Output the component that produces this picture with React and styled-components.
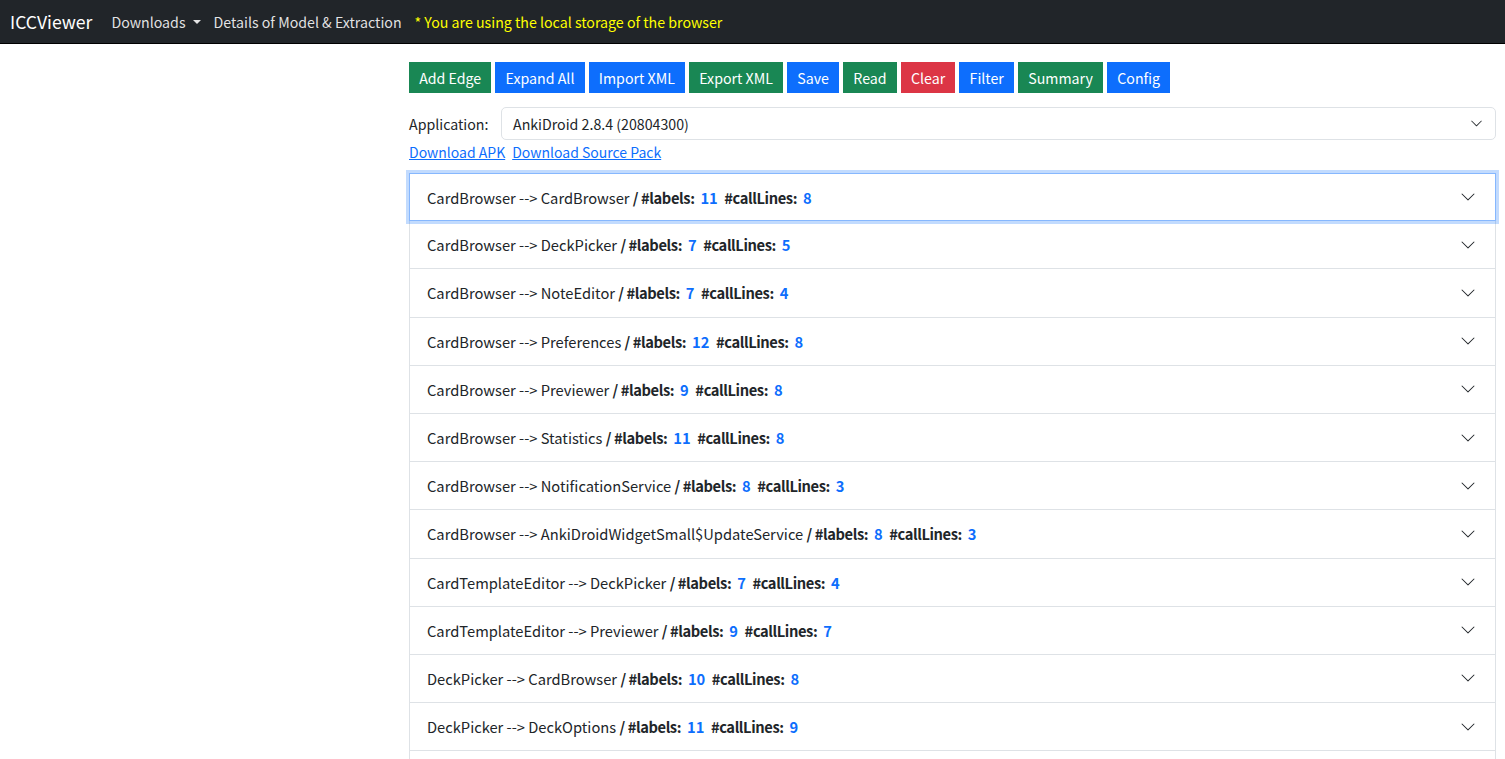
import React from 'react'
import styled, { createGlobalStyle } from 'styled-components'

const GlobalStyle = createGlobalStyle`
  body {
    margin: 0;
    font-family: "Noto Sans CJK SC", "Noto Sans", sans-serif;
    font-size: 15px;
    color: #212529;
    background: #fff;
  }
  * { box-sizing: border-box; }
`

const Navbar = styled.nav`
  height: 44px;
  background: #212529;
  display: flex;
  align-items: center;
  padding: 0 10px;
  border-bottom: 1px solid #000;
`
const Brand = styled.span`
  color: #fff;
  font-size: 17.6px;
  margin-right: 19px;
`
const NavLink = styled.span`
  color: ${p => (p.$warn ? '#ffff00' : 'rgba(255,255,255,.88)')};
  font-size: 14.2px;
  margin-right: 13px;
  display: flex;
  align-items: center;
`
const Caret = styled.span`
  display: inline-block;
  margin-left: 7px;
  border-top: 4px solid rgba(255,255,255,.88);
  border-left: 4px solid transparent;
  border-right: 4px solid transparent;
`

const Page = styled.div`
  display: grid;
  grid-template-columns: 409px 1fr;
  padding-right: 9px;
`
const Main = styled.main`
  padding-top: 18px;
`
const Toolbar = styled.div`
  display: flex;
  gap: 4px;
`
const Button = styled.button`
  font-family: inherit;
  font-size: 14.2px;
  height: 31px;
  padding: 0 9.2px;
  border: 1px solid ${p => p.$color};
  border-radius: 0;
  background: ${p => p.$color};
  color: #fff;
  cursor: pointer;
`
const AppRow = styled.div`
  display: flex;
  align-items: center;
  margin-top: 14px;
`
const Label = styled.label`
  width: 92px;
  font-size: 14.2px;
`
const Select = styled.div`
  flex: 1;
  height: 33px;
  border: 1px solid #dee2e6;
  border-radius: 5px;
  display: flex;
  align-items: center;
  justify-content: space-between;
  padding: 0 12px 0 11px;
  font-size: 14.2px;
`
const Links = styled.div`
  display: flex;
  gap: 7px;
  margin-top: 2px;
  font-size: 14px;
`
const A = styled.a`
  color: #0d6efd;
  text-decoration: underline;
`
const Accordion = styled.div`
  margin-top: 11px;
  border: 1px solid #dee2e6;
  border-bottom: none;
`
const Item = styled.div`
  display: flex;
  align-items: center;
  justify-content: space-between;
  height: 48.2px;
  padding: 0 19px 0 17px;
  border-bottom: 1px solid #dee2e6;
  font-size: 14.7px;
  white-space: pre;
  ${p => p.$focus && `
    border: 1px solid #86b7fe;
    margin: -1px -1px 0;
    box-shadow: 0 0 0 3px rgba(13,110,253,.25);
    position: relative;
  `}
`
const Bold = styled.b`
  font-weight: 700;
  letter-spacing: -0.4px;
`
const Num = styled.span`
  color: #0d6efd;
  font-weight: 700;
`

const Chevron = ({ size = 16 }) => (
  <svg width={size} height={size} viewBox="0 0 16 16" fill="#212529">
    <path fillRule="evenodd" d="M1.646 4.646a.5.5 0 0 1 .708 0L8 10.293l5.646-5.647a.5.5 0 0 1 .708.708l-6 6a.5.5 0 0 1-.708 0l-6-6a.5.5 0 0 1 0-.708z" />
  </svg>
)

const buttons = [
  ['Add Edge', '#198754'],
  ['Expand All', '#0d6efd'],
  ['Import XML', '#0d6efd'],
  ['Export XML', '#198754'],
  ['Save', '#0d6efd'],
  ['Read', '#198754'],
  ['Clear', '#dc3545'],
  ['Filter', '#0d6efd'],
  ['Summary', '#198754'],
  ['Config', '#0d6efd'],
]

const edges = [
  ['CardBrowser', 'CardBrowser', 11, 8],
  ['CardBrowser', 'DeckPicker', 7, 5],
  ['CardBrowser', 'NoteEditor', 7, 4],
  ['CardBrowser', 'Preferences', 12, 8],
  ['CardBrowser', 'Previewer', 9, 8],
  ['CardBrowser', 'Statistics', 11, 8],
  ['CardBrowser', 'NotificationService', 8, 3],
  ['CardBrowser', 'AnkiDroidWidgetSmall$UpdateService', 8, 3],
  ['CardTemplateEditor', 'DeckPicker', 7, 4],
  ['CardTemplateEditor', 'Previewer', 9, 7],
  ['DeckPicker', 'CardBrowser', 10, 8],
  ['DeckPicker', 'DeckOptions', 11, 9],
  ['DeckPicker', 'Info', 3, 2],
]

const App = () => {
  return (
    <>
      <GlobalStyle />
      <Navbar>
        <Brand>ICCViewer</Brand>
        <NavLink>Downloads<Caret /></NavLink>
        <NavLink>Details of Model &amp; Extraction</NavLink>
        <NavLink $warn>* You are using the local storage of the browser</NavLink>
      </Navbar>
      <Page>
        <aside />
        <Main>
          <Toolbar>
            {buttons.map(([t, c]) => (
              <Button key={t} $color={c}>{t}</Button>
            ))}
          </Toolbar>
          <AppRow>
            <Label>Application:</Label>
            <Select>
              <span>AnkiDroid 2.8.4 (20804300)</span>
              <Chevron size={13} />
            </Select>
          </AppRow>
          <Links>
            <A href="#">Download APK</A>
            <A href="#">Download Source Pack</A>
          </Links>
          <Accordion>
            {edges.map(([from, to, labels, lines], i) => (
              <Item key={i} $focus={i === 0}>
                <span>
                  {from} --&gt; {to} <Bold>/ #labels:  </Bold>
                  <Num>{labels}</Num>
                  {'  '}
                  <Bold>#callLines:  </Bold>
                  <Num>{lines}</Num>
                </span>
                <Chevron />
              </Item>
            ))}
          </Accordion>
        </Main>
      </Page>
    </>
  )
}

export default App
